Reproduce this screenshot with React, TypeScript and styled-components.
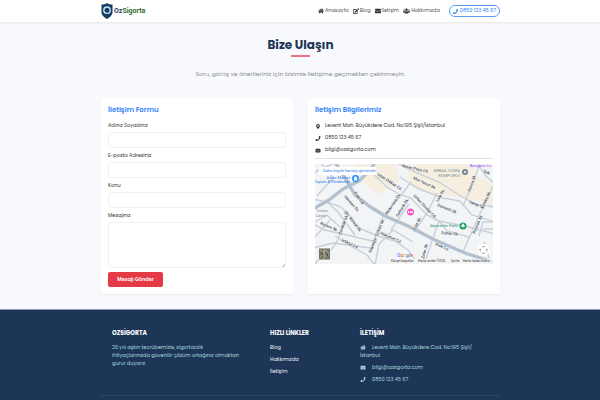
import React from "react";
import styled, { createGlobalStyle } from "styled-components";
import {
  FaHome,
  FaEdit,
  FaEnvelope,
  FaUsers,
  FaPhone,
  FaMapMarkerAlt,
} from "react-icons/fa";

const GlobalStyle = createGlobalStyle`
  *, *::before, *::after { box-sizing: border-box; }
  body {
    margin: 0;
    background: #f8f9fc;
    color: #333;
    font-family: Poppins, Inter, "Noto Sans", sans-serif;
    font-size: 5px;
    line-height: 8px;
  }
  h1, h2, h3, p, ul { margin: 0; padding: 0; }
  ul { list-style: none; }
  a { color: inherit; text-decoration: none; }
`;

const Page = styled.div`
  min-height: 100vh;
  display: flex;
  flex-direction: column;
`;

const Container = styled.div`
  width: 100%;
  max-width: 400px;
  margin: 0 auto;
  padding-left: 1px;
`;

const Header = styled.header`
  background: #fff;
  box-shadow: 0 1px 2px rgba(0, 0, 0, 0.08);
`;

const HeaderRow = styled(Container)`
  height: 22px;
  display: flex;
  align-items: center;
  justify-content: space-between;
`;

const Logo = styled.a`
  display: flex;
  align-items: center;
  gap: 1px;
  font: 700 7px/16px Roboto, sans-serif;
  color: #123f66;
  span span { color: #2f6b2c; }
`;

const Nav = styled.nav`
  display: flex;
  align-items: center;
  gap: 4px;
  color: #555;
`;

const NavLink = styled.a`
  display: flex;
  align-items: center;
  gap: 1px;
  svg { color: #333; width: 6px; height: 6px; }
  &:nth-child(4) svg { width: 7px; }
`;

const PhonePill = styled.a`
  display: flex;
  align-items: center;
  justify-content: center;
  gap: 2px;
  height: 12px;
  margin-left: 5px;
  padding: 0 3px;
  border: 1px solid #5c9bfa;
  border-radius: 6px;
  color: #2d7ff9;
`;

const Main = styled.main`
  padding: 15px 0;
`;

const Title = styled.h1`
  color: #1d3557;
  font-size: 12px;
  line-height: 16px;
  font-weight: 700;
  text-align: center;
  &::after {
    content: "";
    display: block;
    width: 19px;
    height: 2px;
    margin: 2px auto 0;
    background: #ee7380;
  }
`;

const Lead = styled.p`
  margin-top: 13px;
  color: #8a8d91;
  font-size: 6px;
  text-align: center;
`;

const Columns = styled.div`
  display: grid;
  grid-template-columns: 1fr 1fr;
  gap: 15px;
  margin-top: 20px;
`;

const Card = styled.section`
  padding: 8px 7px 7px;
  border-radius: 2px;
  background: #fff;
  box-shadow: 0 1px 2px rgba(0, 0, 0, 0.06);
`;

const CardTitle = styled.h2`
  margin-bottom: 8px;
  color: #2d7ff9;
  font-size: 7px;
  line-height: 8px;
  font-weight: 600;
`;

const Field = styled.div`
  display: flex;
  flex-direction: column;
  gap: 2px;
  margin-bottom: 4px;
  input, textarea {
    width: 100%;
    height: 16px;
    padding: 2px 4px;
    border: 1px solid #f0f1f3;
    border-radius: 3px;
    background: #fff;
    font: inherit;
    outline: none;
  }
  textarea {
    height: 46px;
    resize: none;
  }
`;

const MessageBox = styled.div`
  position: relative;
  display: flex;
  svg {
    position: absolute;
    right: 1px;
    bottom: 1px;
  }
`;

const SubmitButton = styled.button`
  display: block;
  height: 15px;
  min-width: 55px;
  padding: 0 9px;
  border: 0;
  border-radius: 2px;
  background: #e63946;
  color: #fff;
  font: inherit;
  font-weight: 600;
`;

const InfoList = styled.ul`
  display: grid;
  gap: 4px;
  padding-bottom: 4px;
  border-bottom: 1px solid #dfe1e3;
`;

const InfoItem = styled.li`
  display: flex;
  align-items: center;
  svg { width: 6px; margin-right: 4px; }
`;

const MapFrame = styled.svg`
  display: block;
  width: 100%;
  height: 100px;
  margin-top: 5px;
  background: #f3f4f6;
`;

const Footer = styled.footer`
  flex: 1;
  background: #1d3557;
  color: #a8dadc;
  border-top: 1px solid #8e9aab;
`;

const FooterColumns = styled(Container)`
  display: grid;
  grid-template-columns: 127fr 59fr 118fr;
  column-gap: 31px;
  padding: 19px 22px 11px 12px;
  border-bottom: 1px solid #2b4465;
`;

const FooterTitle = styled.h3`
  margin-bottom: 7px;
  color: #fff;
  font-size: 6px;
  line-height: 8px;
  font-weight: 700;
`;

const FooterLinks = styled.ul`
  display: grid;
  gap: 4px;
  color: #f1f4f7;
`;

const ContactLines = styled.ul`
  display: grid;
  gap: 4px;
  svg {
    width: 6px;
    margin-right: 6px;
    vertical-align: -1px;
  }
`;

const majorRoads = [
  "M-2 45 L14 36 L28 25 L44 17 L56 5 L60 -2",
  "M20 -2 L33 19 L40 31 L54 42 L70 52 L93 62 L120 76 L150 89 L180 99",
];

const roads = [
  "M-2 35 L12 38 L26 43 L36 53 L44 64 L60 71 L80 77 L93 86 L104 101",
  "M12 38 L23 48 L34 63 L40 71",
  "M0 58 L12 51 L25 63",
  "M0 73 L15 56",
  "M-2 60 L10 66 L32 71 L62 78",
  "M12 92 L23 76 L28 58",
  "M20 72 L34 81 L52 91 L60 101",
  "M-2 84 L18 79 L40 82 L56 84",
  "M56 88 L62 67 L68 53",
  "M60 101 L64 80 L78 66 L98 78",
  "M53 5 L72 23 L84 30 L96 34 L112 51 L124 57 L150 62 L180 70",
  "M70 50 L84 34 L96 18",
  "M80 -2 L100 8 L124 18 L144 31 L160 40 L180 43",
  "M85 13 L104 25 L128 34 L145 37",
  "M122 29 L112 49 L99 68",
  "M148 42 L160 14 L165 -2",
  "M145 37 L157 51 L180 58",
  "M178 22 L168 43 L155 72 L148 88",
  "M109 101 L116 80 L124 57",
  "M94 40 L80 60 L76 66",
  "M164 2 L171 12 L180 20",
  "M164 72 L168 58 L180 58",
  "M168 65 L180 65 M169 78 L174 94",
  "M0 8 L22 -2 M5 -2 L18 14 L2 32",
  "M0 100 L12 86",
  "M124 57 L132 67 L154 73",
];

type Label = [x: number, y: number, angle: number, text: string];
const streetLabels: Label[] = [
  [62, 8, 33, "Uzan Dikkaz Cd."],
  [39, 26, 55, "Erek Cd."],
  [29, 30, 48, "Harman Sk."],
  [29, 45, 52, "Şht. Kemal Sk."],
  [5, 57, 24, "Badem Sk."],
  [26, 68, -70, "Zambak Sk."],
  [26, 74, 25, "İstiklal Cd."],
  [56, 86, -68, "Hayrettin Turhan Sk."],
  [65, 67, 24, "Hükümet Cd."],
  [72, 48, -56, "Akdurmuş Sk."],
  [83, 50, -58, "Gelincik Sk."],
  [87, 0, 13, "Nişan Paşa Cd."],
  [98, 12, 25, "Mor Yasuf Sk."],
  [98, 29, 46, "Orhan Dündar Cd."],
  [122, 39, 22, "Osmanlı Sk."],
  [100, 63, -62, "Lale Sk."],
  [123, 35, -60, "Lale Sk."],
  [155, 25, -70, "Gonca Sk."],
  [154, 36, 20, "Saray Cd."],
  [168, 5, 24, "Sak."],
  [168, 42, -65, "Kardeş Sk."],
  [160, 67, -67, "Pınarım Sk."],
  [126, 67, 5, "Sultan Sk."],
  [120, 78, 24, "Erek Cd."],
  [109, 92, -75, "Zafer Sk."],
];

const StreetMap = () => (
  <MapFrame
    viewBox="0 0 178 100"
    preserveAspectRatio="xMidYMid slice"
    role="img"
    aria-label="Harita"
    fontFamily="Roboto, sans-serif"
  >
    <path d="M40 0 H80 L84 17 L63 31 L48 17 Z" fill="#f6eedf" />
    <path d="M92 4 L103 0 H157 L160 12 L178 20 V42 L150 34 L122 31 L97 23 Z" fill="#f6eedf" />
    <g fill="none" stroke="#c5d0da" strokeWidth="1.4">
      {roads.map((d) => <path key={d} d={d} />)}
    </g>
    <g fill="none" stroke="#b3c1ce" strokeWidth="3.4" strokeLinejoin="round">
      {majorRoads.map((d) => <path key={d} d={d} />)}
    </g>
    <g fontSize="4" fontWeight="500" fill="#35414c" stroke="#fff" strokeWidth="0.4" paintOrder="stroke">
      {streetLabels.map(([x, y, angle, text]) => (
        <text key={`${text}${x}`} transform={`translate(${x} ${y + 3}) rotate(${angle})`}>{text}</text>
      ))}
    </g>
    <rect x="4" y="3" width="57" height="8" fill="#fff" />
    <g fontSize="4" fill="#2c7be5">
      <text x="8" y="8">Daha büyük haritayı görüntüle</text>
      <text x="35" y="15" textAnchor="end">Asian Market</text>
      <text x="35" y="19" textAnchor="end">Toptan &amp; Perakende</text>
    </g>
    <g fontSize="4" fill="#78909c" textAnchor="end">
      <text x="145" y="8">ERBAA TUĞRA</text>
      <text x="145" y="13">KOMPLEKSİ</text>
      <text x="13" y="48">Sultan</text>
      <text x="11" y="53">Camii</text>
    </g>
    <text x="176" y="3" fontSize="4" fill="#a142f4" textAnchor="end">Banyoes Cc</text>
    <text x="143" y="63" fontSize="4" fill="#23996b" textAnchor="end">Alperenler Parkı</text>
    <circle cx="40.500" cy="14.500" r="3.4" fill="#1a8cff" />
    <path d="M38.800 13.500 h3.400 v3 h-3.400 Z M39.500 13.500 v-1 h2 v1" fill="#fff" />
    <circle cx="95.500" cy="48" r="3.500" fill="#f151c5" />
    <path d="M93.500 46.500 v3 M93.500 48.500 h4 v1 M95 47.500 h2.500 v1" stroke="#fff" strokeWidth="0.7" fill="none" />
    <circle cx="150" cy="8" r="3" fill="#6c8796" />
    <circle cx="150" cy="8" r="1" fill="#fff" />
    <circle cx="148" cy="62" r="3.500" fill="#17a05e" />
    <path d="M148 59.500 l1.800 3 h-3.600 Z M148 62 v2" fill="#fff" stroke="#fff" strokeWidth="0.5" />
    <rect x="3.500" y="84" width="12" height="12" rx="1" fill="#77766a" stroke="#fff" strokeWidth="0.8" />
    <path d="M5 86 l3 3 l3 -3 l3 4 M5 93 l3 -3 l4 3 l2 -2 M9 85 v10" stroke="#b9ad96" strokeWidth="0.9" fill="none" />
    <path d="M6 88 l2 3 M12 90 l1 3" stroke="#48513f" strokeWidth="1.1" />
    <text x="82" y="93" fontSize="5" fontWeight="500" stroke="#fff" strokeWidth="0.5" paintOrder="stroke">
      <tspan fill="#4285f4">G</tspan>
      <tspan fill="#ea4335">o</tspan>
      <tspan fill="#fbbc05">o</tspan>
      <tspan fill="#4285f4">g</tspan>
      <tspan fill="#34a853">l</tspan>
      <tspan fill="#ea4335">e</tspan>
    </text>
    <rect x="75" y="95" width="103" height="5" fill="#f5f5f5" fillOpacity="0.8" />
    <g fontSize="3" fill="#333">
      <text x="76" y="98">Klavye kısayolları</text>
      <text x="103" y="98">Harita verileri ©2026</text>
      <text x="136" y="98">Şartlar</text>
      <text x="148" y="98">Harita hatası bildirin</text>
    </g>
    <circle cx="168.500" cy="86" r="6" fill="#fff" />
    <path
      d="M167.300 83.300 l1.200 -1.200 l1.200 1.200 M167.300 88.700 l1.200 1.200 l1.200 -1.200 M165.800 84.800 l-1.200 1.200 l1.200 1.200 M171.200 84.800 l1.200 1.200 l-1.200 1.200"
      fill="none"
      stroke="#666"
      strokeWidth="0.9"
    />
  </MapFrame>
);

const ShieldLogo = () => (
  <svg width="12" height="16" viewBox="0 0 12 16" aria-hidden="true">
    <path d="M6 0 C4.500 1.200 2.300 1.500 0.500 1.500 V9 C0.500 12.500 3.500 14.500 6 16 C8.500 14.500 11.500 12.500 11.500 9 V1.500 C9.700 1.500 7.500 1.200 6 0 Z" fill="#123f66" />
    <circle cx="6" cy="7.200" r="3.200" fill="none" stroke="#d7e5ee" strokeWidth="1.300" />
  </svg>
);

const fields = [
  { id: "name", label: "Adınız Soyadınız", type: "text" },
  { id: "email", label: "E-posta Adresiniz", type: "email" },
  { id: "subject", label: "Konu", type: "text" },
];

export default function App() {
  return (
    <Page>
      <GlobalStyle />
      <Header>
        <HeaderRow>
          <Logo href="#"><ShieldLogo /><span>Oz<span>Sigorta</span></span></Logo>
          <Nav>
            <NavLink href="#"><FaHome />Anasayfa</NavLink>
            <NavLink href="#"><FaEdit />Blog</NavLink>
            <NavLink href="#"><FaEnvelope />İletişim</NavLink>
            <NavLink href="#"><FaUsers />Hakkımızda</NavLink>
            <PhonePill href="tel:08501234567"><FaPhone />0850 123 45 67</PhonePill>
          </Nav>
        </HeaderRow>
      </Header>
      <Main>
        <Container>
          <Title>Bize Ulaşın</Title>
          <Lead>Soru, görüş ve önerileriniz için bizimle iletişime geçmekten çekinmeyin.</Lead>
          <Columns>
            <Card>
              <CardTitle>İletişim Formu</CardTitle>
              <form onSubmit={(event) => event.preventDefault()}>
                {fields.map(({ id, label, type }) => (
                  <Field key={id}>
                    <label htmlFor={id}>{label}</label>
                    <input id={id} type={type} />
                  </Field>
                ))}
                <Field>
                  <label htmlFor="message">Mesajınız</label>
                  <MessageBox>
                    <textarea id="message" />
                    <svg width="3" height="3" viewBox="0 0 3 3" aria-hidden="true">
                      <path d="M0 3 L3 0 M2 3 L3 2" stroke="#999" strokeWidth="0.6" />
                    </svg>
                  </MessageBox>
                </Field>
                <SubmitButton type="submit">Mesajı Gönder</SubmitButton>
              </form>
            </Card>
            <Card>
              <CardTitle>İletişim Bilgilerimiz</CardTitle>
              <InfoList>
                <InfoItem><FaMapMarkerAlt />Levent Mah. Büyükdere Cad. No:195 Şişli/İstanbul</InfoItem>
                <InfoItem><FaPhone />0850 123 45 67</InfoItem>
                <InfoItem><FaEnvelope />bilgi@ozsigorta.com</InfoItem>
              </InfoList>
              <StreetMap />
            </Card>
          </Columns>
        </Container>
      </Main>
      <Footer>
        <FooterColumns>
          <div>
            <FooterTitle>OZSİGORTA</FooterTitle>
            <p>20 yılı aşkın tecrübemizle, sigortacılık ihtiyaçlarınızda güvenilir çözüm ortağınız olmaktan gurur duyarız.</p>
          </div>
          <div>
            <FooterTitle>HIZLI LİNKLER</FooterTitle>
            <FooterLinks>
              <li><a href="#">Blog</a></li>
              <li><a href="#">Hakkımızda</a></li>
              <li><a href="#">İletişim</a></li>
            </FooterLinks>
          </div>
          <div>
            <FooterTitle>İLETİŞİM</FooterTitle>
            <ContactLines>
              <li><FaHome />Levent Mah. Büyükdere Cad. No:195 Şişli/ İstanbul</li>
              <li><FaEnvelope />bilgi@ozsigorta.com</li>
              <li><FaPhone />0850 123 45 67</li>
            </ContactLines>
          </div>
        </FooterColumns>
      </Footer>
    </Page>
  );
}
